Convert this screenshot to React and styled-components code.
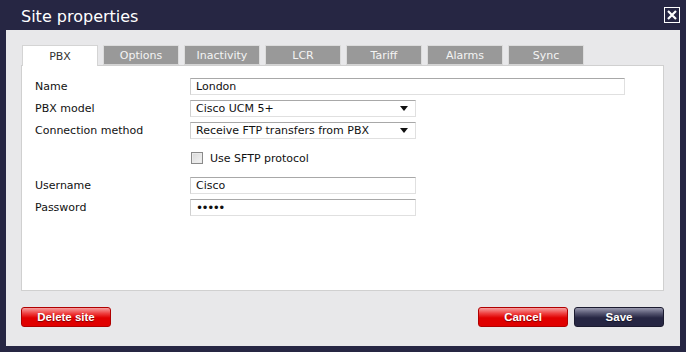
import React, { useState } from 'react';
import styled, { createGlobalStyle } from 'styled-components';

const GlobalStyle = createGlobalStyle`
  html, body {
    margin: 0;
    padding: 0;
    background: #262643;
  }
  * {
    box-sizing: border-box;
  }
`;

const TABS = ['PBX', 'Options', 'Inactivity', 'LCR', 'Tariff', 'Alarms', 'Sync'];

const Window = styled.div`
  width: 686px;
  height: 352px;
  background: #262643;
  padding: 0 6px 6px 6px;
  display: flex;
  flex-direction: column;
  font-family: 'DejaVu Sans', sans-serif;
`;

const TitleBar = styled.div`
  height: 30px;
  display: flex;
  align-items: center;
  justify-content: space-between;
  padding-left: 15px;
`;

const Title = styled.h1`
  margin: 0;
  font-family: 'DejaVu Sans', sans-serif;
  font-weight: normal;
  font-size: 16px;
  color: #ffffff;
  padding-top: 2px;
`;

const CloseBox = styled.button`
  width: 16px;
  height: 16px;
  padding: 0;
  border: 1px solid #ffffff;
  background: transparent;
  display: flex;
  align-items: center;
  justify-content: center;
  cursor: pointer;
`;

const Body = styled.div`
  flex: 1;
  background: #e8e8ea;
  padding: 15px 16px 0 15px;
  display: flex;
  flex-direction: column;
`;

const TabRow = styled.div`
  display: flex;
  gap: 5px;
  padding-left: 1px;
  height: 20px;
  position: relative;
  z-index: 1;
`;

const Tab = styled.div`
  width: 76px;
  height: ${p => (p.$active ? '21px' : '20px')};
  display: flex;
  align-items: center;
  justify-content: center;
  font-size: 11px;
  color: ${p => (p.$active ? '#333' : '#f4f4f4')};
  background: ${p => (p.$active ? '#ffffff' : '#999999')};
  border: 1px solid ${p => (p.$active ? '#d4d4d4' : '#dcdcdc')};
  border-bottom: ${p => (p.$active ? 'none' : '1px solid #d4d4d4')};
  cursor: pointer;
`;

const Panel = styled.div`
  height: 226px;
  background: #ffffff;
  border: 1px solid #d0d0d0;
  padding: 12px 13px 0 13px;
`;

const Form = styled.div`
  display: grid;
  grid-template-columns: 155px 1fr;
  row-gap: 5px;
  align-items: center;
`;

const Label = styled.label`
  font-size: 11px;
  color: #111;
`;

const Field = styled.input`
  width: ${p => p.$w}px;
  height: 17px;
  border: 1px solid #e0e0e0;
  border-top-color: #a8a8a8;
  border-left-color: #d0d0d0;
  padding: 0 5px;
  font-family: 'DejaVu Sans', sans-serif;
  font-size: ${p => (p.type === 'password' ? '12px' : '11px')};
  color: #111;
  outline: none;
  letter-spacing: ${p => (p.type === 'password' ? '-1.5px' : '0')};
`;

const SelectBox = styled.div`
  width: 226px;
  height: 17px;
  border: 1px solid #e0e0e0;
  border-top-color: #a8a8a8;
  border-left-color: #d0d0d0;
  padding: 0 5px;
  display: flex;
  align-items: center;
  justify-content: space-between;
  font-size: 11px;
  color: #111;
`;

const Arrow = styled.span`
  width: 0;
  height: 0;
  border-left: 4px solid transparent;
  border-right: 4px solid transparent;
  border-top: 5px solid #111;
  margin-right: 2px;
`;

const CheckRow = styled.div`
  grid-column: 2;
  display: flex;
  align-items: center;
  gap: 7px;
  height: 28px;
  font-size: 11px;
  color: #111;
`;

const CheckBox = styled.span`
  width: 12px;
  height: 12px;
  margin-left: 1px;
  border: 1px solid #8a8a8a;
  background: linear-gradient(135deg, #d8d8d8, #f4f4f4);
  box-shadow: inset 0 0 0 1px #eaeaea;
`;

const Footer = styled.div`
  display: flex;
  align-items: center;
  padding-top: 16px;
  gap: 6px;
`;

const Spacer = styled.div`
  flex: 1;
`;

const Button = styled.button`
  width: 90px;
  height: 20px;
  border-radius: 3px;
  border: 1px solid ${p => (p.$dark ? '#1b1b30' : '#b00000')};
  background: ${p =>
    p.$dark
      ? 'linear-gradient(#9a9ab0 0%, #555570 30%, #262643 55%, #262643 100%)'
      : 'linear-gradient(#f6a0a0 0%, #ee4040 30%, #e00000 55%, #e00000 100%)'};
  color: #ffffff;
  font-family: 'Liberation Sans', Arial, sans-serif;
  font-weight: bold;
  font-size: 11.5px;
  text-shadow: 0 1px 1px rgba(0, 0, 0, 0.45);
  padding: 0;
  cursor: pointer;
`;

const CloseIcon = () => (
  <svg width="12" height="12" viewBox="0 0 12 12">
    <path d="M2 2 L10 10 M10 2 L2 10" stroke="#ffffff" strokeWidth="2.2" />
  </svg>
);

export default function App() {
  const [active, setActive] = useState('PBX');
  return (
    <>
      <GlobalStyle />
      <Window>
        <TitleBar>
          <Title>Site properties</Title>
          <CloseBox aria-label="Close">
            <CloseIcon />
          </CloseBox>
        </TitleBar>
        <Body>
          <TabRow>
            {TABS.map(t => (
              <Tab key={t} $active={active === t} onClick={() => setActive(t)}>
                {t}
              </Tab>
            ))}
          </TabRow>
          <Panel>
            <Form>
              <Label>Name</Label>
              <Field $w={435} defaultValue="London" />
              <Label>PBX model</Label>
              <SelectBox>
                <span>Cisco UCM 5+</span>
                <Arrow />
              </SelectBox>
              <Label>Connection method</Label>
              <SelectBox>
                <span>Receive FTP transfers from PBX</span>
                <Arrow />
              </SelectBox>
              <CheckRow>
                <CheckBox />
                Use SFTP protocol
              </CheckRow>
              <Label>Username</Label>
              <Field $w={226} defaultValue="Cisco" />
              <Label>Password</Label>
              <Field $w={226} type="password" defaultValue="cisco" />
            </Form>
          </Panel>
          <Footer>
            <Button>Delete site</Button>
            <Spacer />
            <Button>Cancel</Button>
            <Button $dark>Save</Button>
          </Footer>
        </Body>
      </Window>
    </>
  );
}
